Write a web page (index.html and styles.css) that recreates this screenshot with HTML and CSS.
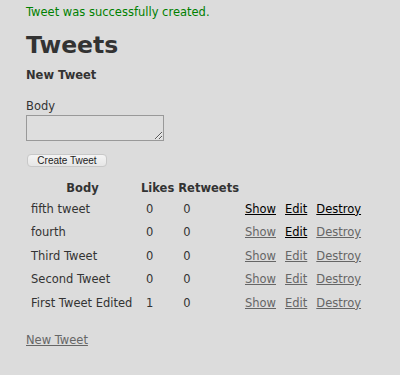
FILE: index.html
```html
<!DOCTYPE html>
<html>
<head>
    <meta charset="utf-8">
    <title>Tweets</title>
    <link rel="stylesheet" href="styles.css">
</head>
<body>
    <p class="notice">Tweet was successfully created.</p>

    <h1>Tweets</h1>

    <div class="new-tweet">
        <h2>New Tweet</h2>
        <form>
            <div class="field">
                <label for="tweet_body">Body</label>
                <textarea id="tweet_body"></textarea>
            </div>
            <div class="actions">
                <button type="button">Create Tweet</button>
            </div>
        </form>
    </div>

    <table class="tweets">
        <thead>
            <tr>
                <th>Body</th>
                <th>Likes</th>
                <th>Retweets</th>
                <th colspan="3"></th>
            </tr>
        </thead>
        <tbody>
            <tr>
                <td class="body">fifth tweet</td>
                <td class="num">0</td>
                <td class="num">0</td>
                <td class="link"><a href="#">Show</a></td>
                <td class="link"><a href="#">Edit</a></td>
                <td class="link"><a href="#">Destroy</a></td>
            </tr>
            <tr>
                <td class="body">fourth</td>
                <td class="num">0</td>
                <td class="num">0</td>
                <td class="link"><a class="visited" href="#">Show</a></td>
                <td class="link"><a href="#">Edit</a></td>
                <td class="link"><a class="visited" href="#">Destroy</a></td>
            </tr>
            <tr>
                <td class="body">Third Tweet</td>
                <td class="num">0</td>
                <td class="num">0</td>
                <td class="link"><a class="visited" href="#">Show</a></td>
                <td class="link"><a class="visited" href="#">Edit</a></td>
                <td class="link"><a class="visited" href="#">Destroy</a></td>
            </tr>
            <tr>
                <td class="body">Second Tweet</td>
                <td class="num">0</td>
                <td class="num">0</td>
                <td class="link"><a class="visited" href="#">Show</a></td>
                <td class="link"><a class="visited" href="#">Edit</a></td>
                <td class="link"><a class="visited" href="#">Destroy</a></td>
            </tr>
            <tr>
                <td class="body">First Tweet Edited</td>
                <td class="num">1</td>
                <td class="num">0</td>
                <td class="link"><a class="visited" href="#">Show</a></td>
                <td class="link"><a class="visited" href="#">Edit</a></td>
                <td class="link"><a class="visited" href="#">Destroy</a></td>
            </tr>
        </tbody>
    </table>

    <p class="bottom-link"><a class="visited" href="#">New Tweet</a></p>
</body>
</html>
```

FILE: styles.css
```css
body {
    margin: 0;
    padding: 5px 26px 0;
    background: #dcdcdc;
    color: #333;
    font-family: "DejaVu Sans", Verdana, sans-serif;
    font-size: 11.5px;
    line-height: 15.5px;
}

a {
    color: #000;
}

a.visited {
    color: #666;
}

.notice {
    margin: 0;
    color: green;
}

h1 {
    margin: 10px 0 0;
    font-size: 23.5px;
    line-height: 28px;
}

h2 {
    margin: 9px 0 0;
    font-size: 11.5px;
}

.field {
    margin-top: 16px;
}

.field label {
    display: block;
}

textarea {
    display: block;
    box-sizing: border-box;
    width: 138px;
    height: 26px;
    margin: 0;
    border: 1px solid #999;
    background: #dedede;
}

.actions {
    margin-top: 12px;
}

button {
    box-sizing: border-box;
    width: 80px;
    height: 13px;
    margin-left: 1px;
    padding: 0;
    border: 1px solid #c8c8c8;
    border-radius: 4px;
    background: linear-gradient(#f4f4f4, #e6e6e6);
    color: #222;
    font-family: "Liberation Sans", Arial, sans-serif;
    font-size: 10px;
    line-height: 11px;
}

.tweets {
    margin-top: 9px;
    margin-left: -1px;
    border-spacing: 2px;
    white-space: nowrap;
}

.tweets th {
    padding: 2px 1px 0;
    text-align: center;
}

.tweets td {
    padding: 3px 4px;
    text-align: left;
}

.tweets td.body {
    width: 103px;
}

.tweets td.num {
    padding-left: 6px;
}

.tweets td.link {
    padding-left: 3px;
}

.bottom-link {
    margin: 17px 0 0;
}
```
